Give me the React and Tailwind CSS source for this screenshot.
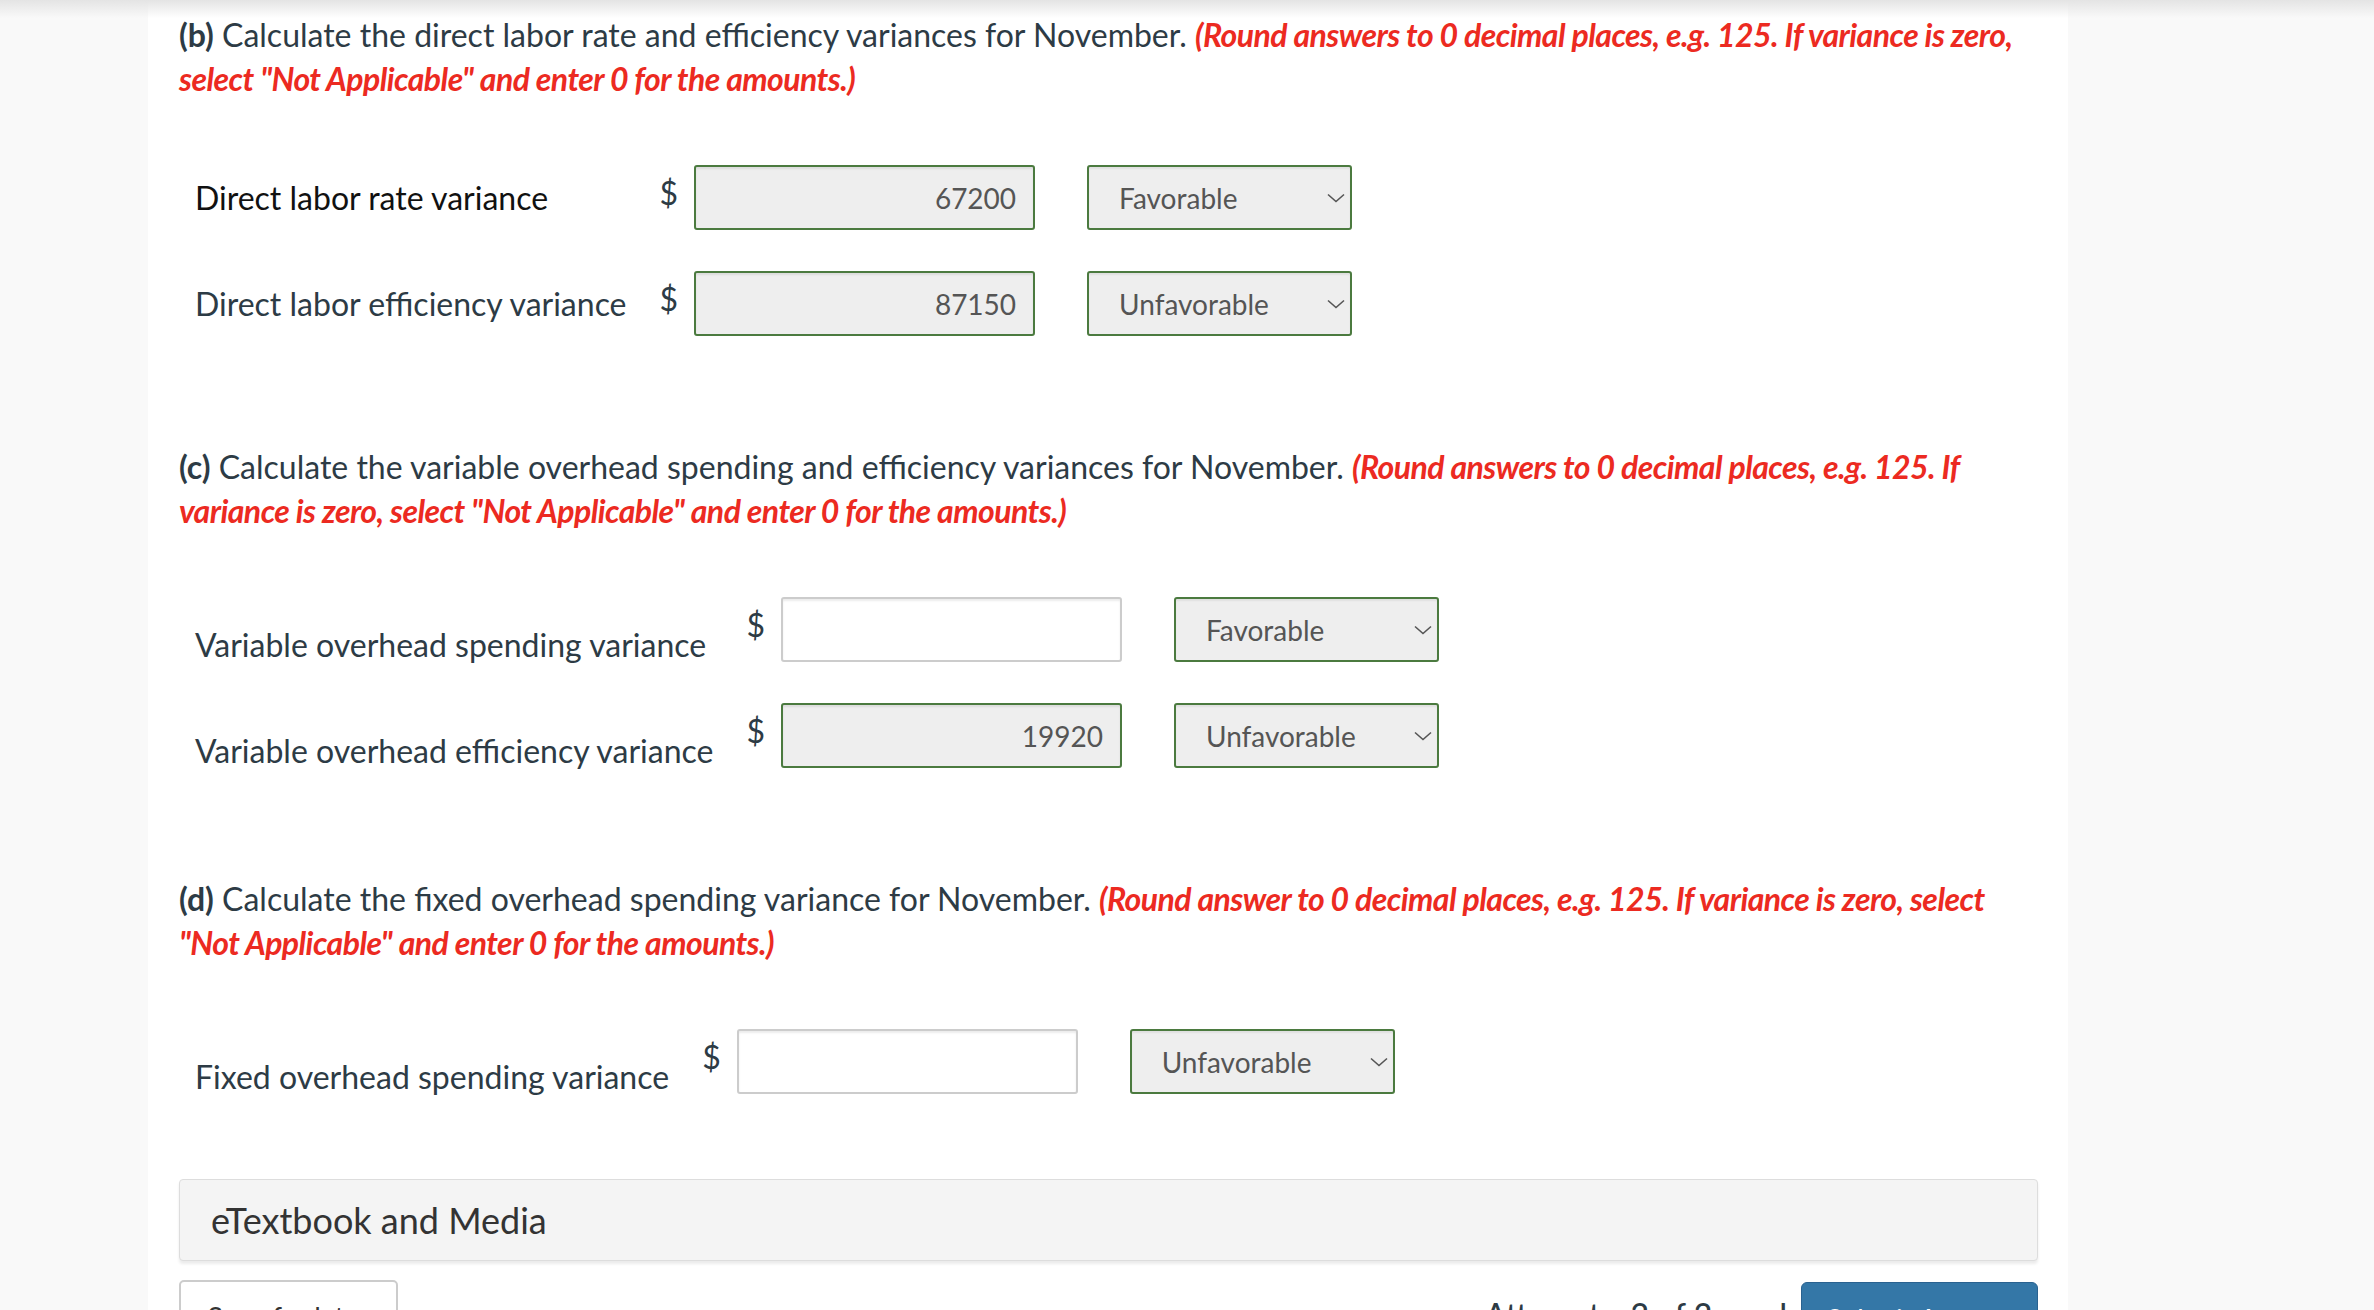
const sections = [
  {
    key: "b",
    letter: "(b)",
    text: "Calculate the direct labor rate and efficiency variances for November.",
    line1: "(Round answers to 0 decimal places, e.g. 125. If variance is zero,",
    line2: "select \"Not Applicable\" and enter 0 for the amounts.)",
    labelTop: "mt-[16px]",
    rows: [
      { label: "Direct labor rate variance", value: "67200", choice: "Favorable", filled: true, dark: true },
      { label: "Direct labor efficiency variance", value: "87150", choice: "Unfavorable", filled: true },
    ],
  },
  {
    key: "c",
    letter: "(c)",
    text: "Calculate the variable overhead spending and efficiency variances for November.",
    line1: "(Round answers to 0 decimal places, e.g. 125. If",
    line2: "variance is zero, select \"Not Applicable\" and enter 0 for the amounts.)",
    labelTop: "mt-[31px]",
    rows: [
      { label: "Variable overhead spending variance", value: "", choice: "Favorable", filled: false },
      { label: "Variable overhead efficiency variance", value: "19920", choice: "Unfavorable", filled: true },
    ],
  },
  {
    key: "d",
    letter: "(d)",
    text: "Calculate the fixed overhead spending variance for November.",
    line1: "(Round answer to 0 decimal places, e.g. 125. If variance is zero, select",
    line2: "\"Not Applicable\" and enter 0 for the amounts.)",
    labelTop: "mt-[31px]",
    rows: [
      { label: "Fixed overhead spending variance", value: "", choice: "Unfavorable", filled: false },
    ],
  },
]

function Chevron() {
  return (
    <svg width="18" height="10" viewBox="0 0 18 10" fill="none">
      <path d="M1 1.5 L9 8.5 L17 1.5" stroke="#555555" strokeWidth="1.6" />
    </svg>
  )
}

function Section({ s, className }) {
  return (
    <section className={className}>
      <p className="text-[32px] leading-[44px] text-[#2d3b45]">
        <span className="font-bold">{s.letter}</span> {s.text}{" "}
        <span className="font-bold italic text-[#ec2a21] tracking-[-0.55px]">
          {s.line1}
          <br />
          {s.line2}
        </span>
      </p>

      <div className="mt-[64px] pl-[16px] grid grid-cols-[max-content_max-content_max-content_max-content] gap-y-[41px]">
        {s.rows.map((r) => (
          <div key={r.label} className="contents">
            <div
              className={`self-start ${s.labelTop} mr-[33px] text-[32px] leading-[34px] ${
                r.dark ? "text-[#111111]" : "text-[#2d3b45]"
              }`}
            >
              {r.label}
            </div>
            <div className="self-start mt-[6px] mr-[16px] text-[32px] leading-[44px] text-[#2d3b45]">$</div>
            <input
              readOnly
              value={r.value}
              className={`w-[341px] h-[65px] mr-[52px] rounded-[3px] border-2 pr-[17px] text-right text-[28px] text-[#555555] outline-none shadow-[inset_0_2px_2px_rgba(0,0,0,0.08)] ${
                r.filled ? "bg-[#eeeeee] border-[#4b7a3f]" : "bg-white border-[#cccccc]"
              }`}
            />
            <div className="w-[265px] h-[65px] rounded-[3px] border-2 border-[#4b7a3f] bg-[#eeeeee] flex items-center justify-between pl-[30px] pr-[5px] text-[28px] text-[#555555] shadow-[inset_0_2px_2px_rgba(0,0,0,0.06)]">
              <span>{r.choice}</span>
              <Chevron />
            </div>
          </div>
        ))}
      </div>
    </section>
  )
}

export default function App() {
  return (
    <div className="relative h-[1310px] w-full overflow-hidden bg-[#f9f9f9] font-[Lato,sans-serif] flex">
      {/* header shadow */}
      <div className="absolute inset-x-0 top-0 h-[18px] bg-gradient-to-b from-[#e4e4e4] to-transparent pointer-events-none" />

      <div className="w-[148px] shrink-0" />

      <main className="w-[1920px] shrink-0 bg-white pl-[31px] pr-[30px] pt-[13px]">
        {sections.map((s, i) => (
          <Section key={s.key} s={s} className={i === 0 ? "" : "mt-[109px]"} />
        ))}

        <div className="mt-[85px] h-[82px] rounded-[4px] border border-[#dddddd] bg-[#f4f4f4] flex items-center pl-[31px] text-[36px] text-[#333333] shadow-[0_3px_3px_rgba(0,0,0,0.08)]">
          eTextbook and Media
        </div>

        <div className="mt-[19px] flex items-start justify-between">
          <button className="w-[219px] h-[64px] rounded-[5px] border-2 border-[#cccccc] bg-white text-[28px] text-[#333333] pt-[10px]">
            Save for later
          </button>
          <div className="flex items-start gap-[14px]">
            <span className="mt-[13px] text-[32px] leading-[44px] font-medium text-[#2d3b45]">Attempts: 2 of 2 used</span>
            <button className="mt-[2px] w-[237px] h-[64px] rounded-[6px] bg-[#3477a7] border border-[#2a6290] text-[28px] text-white pt-[10px]">
              Submit Answer
            </button>
          </div>
        </div>
      </main>
    </div>
  )
}
